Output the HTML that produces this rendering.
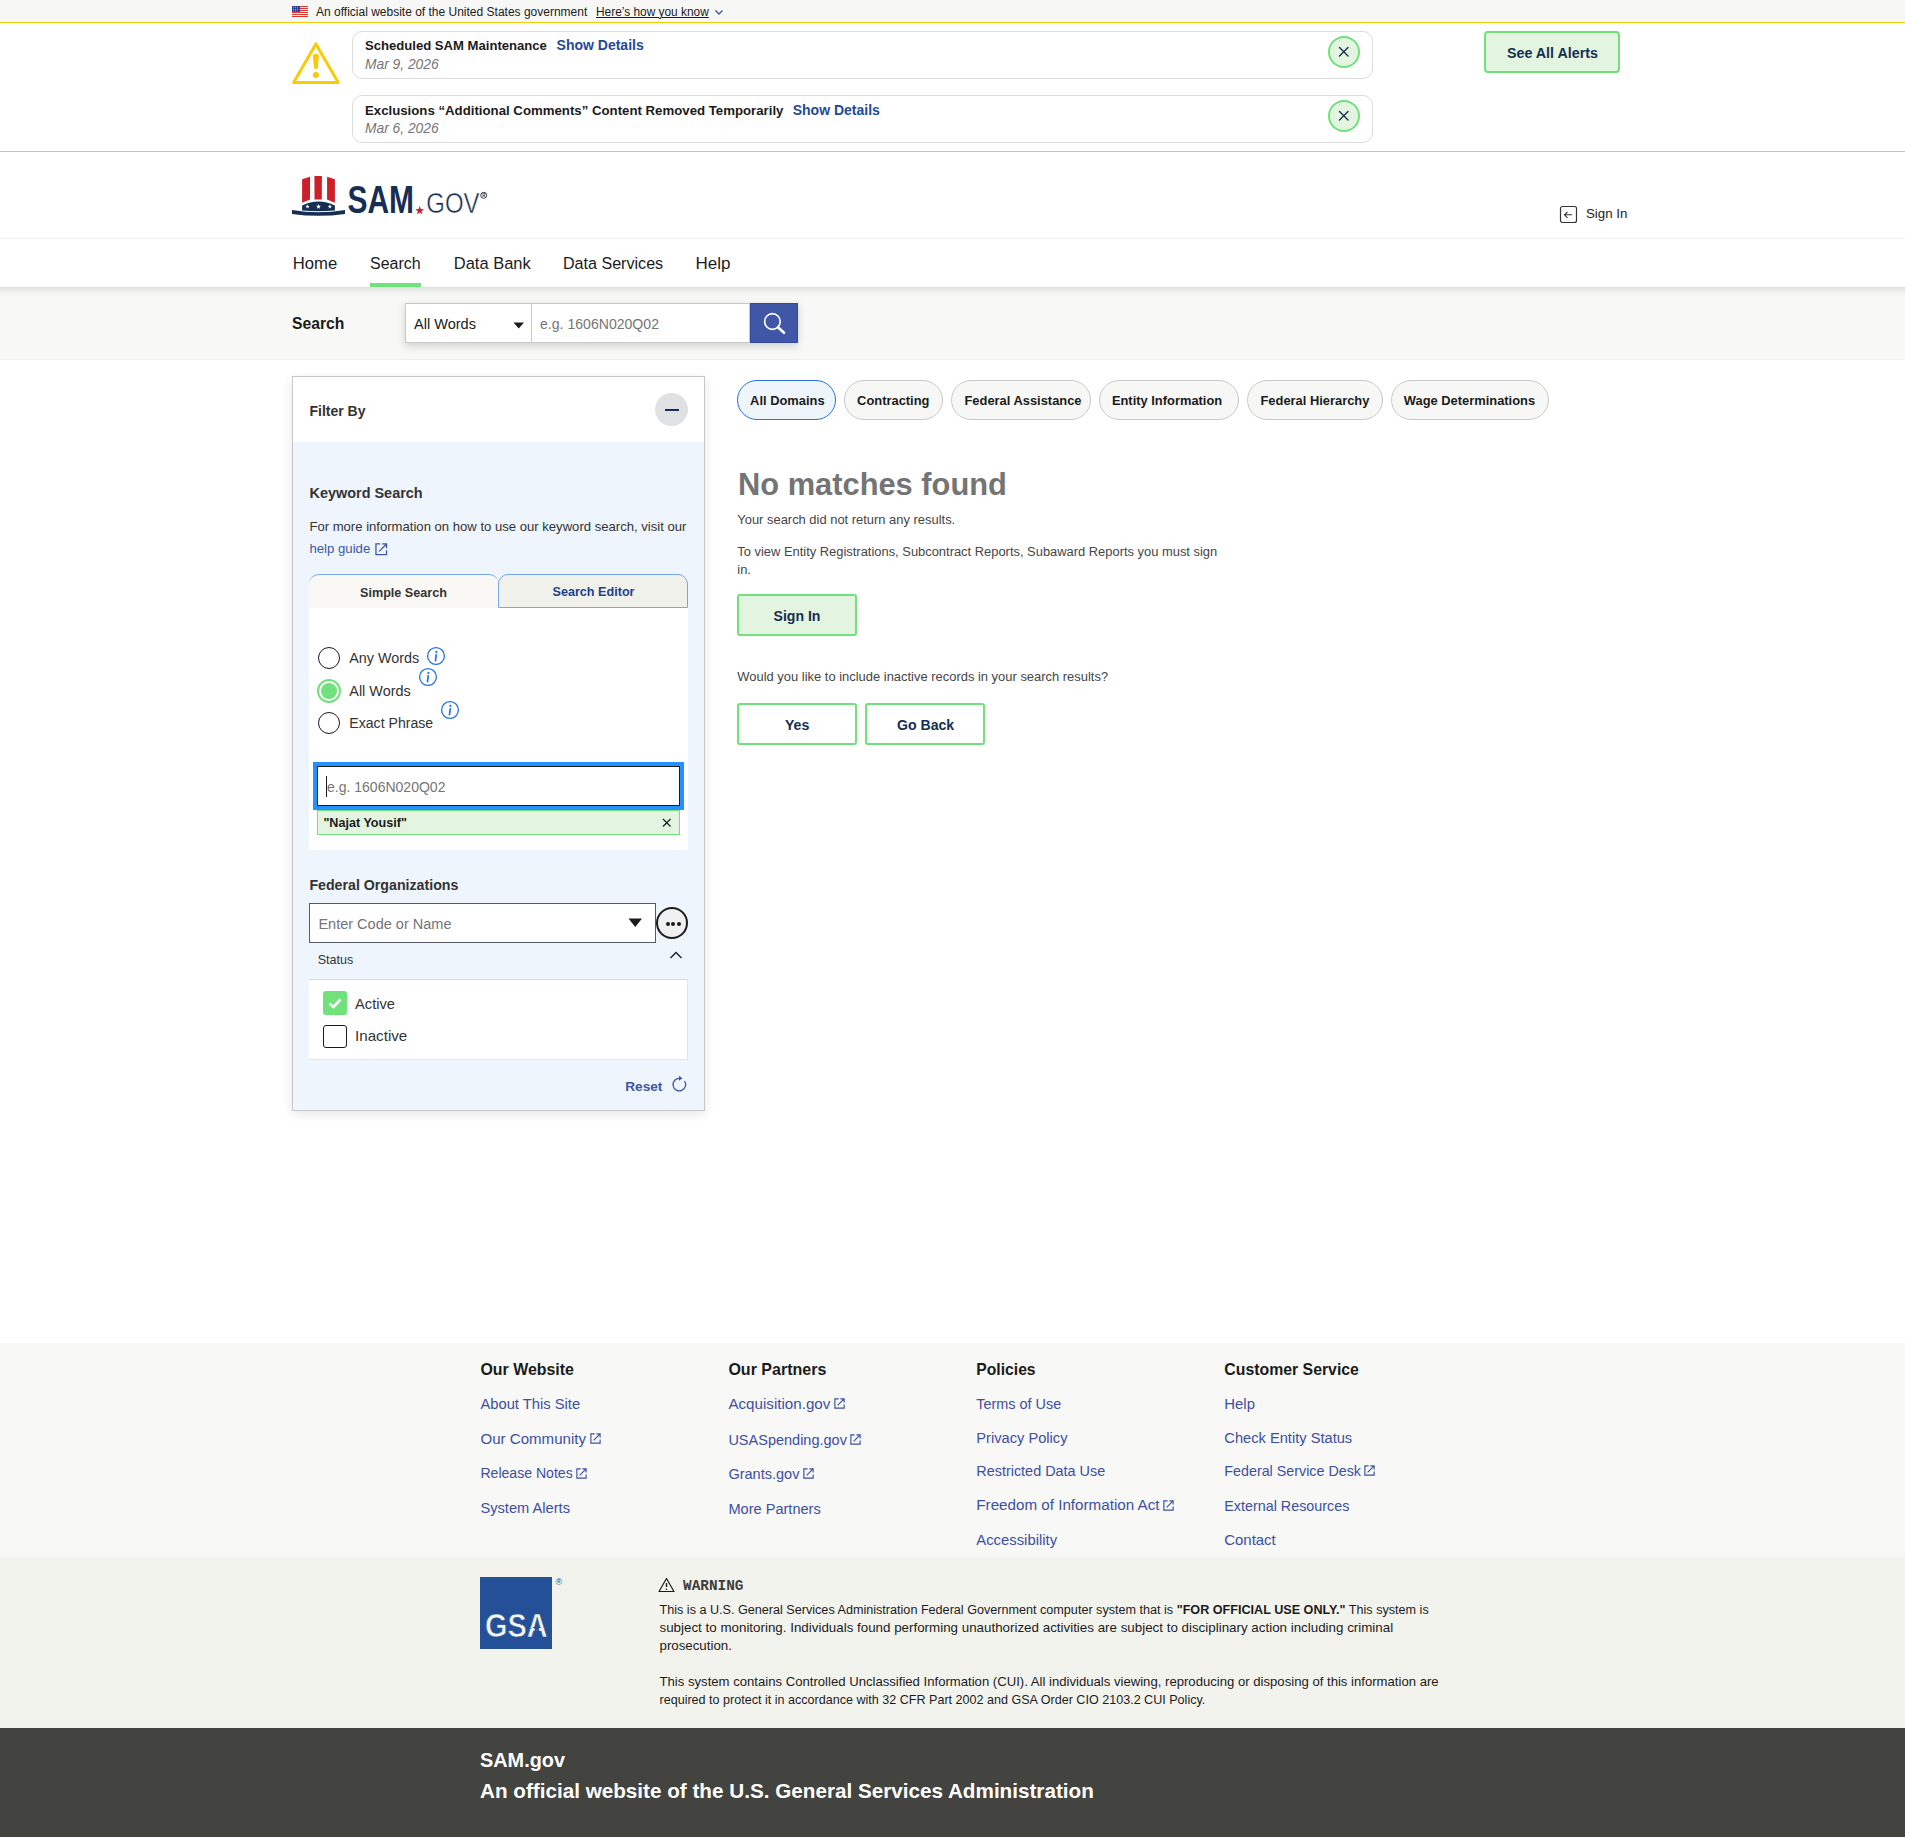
<!DOCTYPE html><html><head><meta charset="utf-8"><title>SAM.gov Search</title><style>
html,body{margin:0;padding:0;width:1905px;height:1837px;overflow:hidden;background:#fff;font-family:"Liberation Sans",sans-serif}
.t{position:absolute;line-height:1;white-space:nowrap}
.b{position:absolute;display:block}
</style></head><body>
<div class="b" style="left:0px;top:0px;width:1905px;height:22px;background:#f7f7f5"></div>
<div class="b" style="left:0px;top:22px;width:1905px;height:1px;background:#f7cb05"></div>
<svg class="b" style="left:292px;top:6px;" width="16" height="11" viewBox="0 0 16 11"><rect width="16" height="11" fill="#fff"/><rect y="0" width="16" height="1.1" fill="#d83933"/><rect y="2" width="16" height="1.1" fill="#d83933"/><rect y="4" width="16" height="1.1" fill="#d83933"/><rect y="6" width="16" height="1.1" fill="#d83933"/><rect y="8" width="16" height="1.1" fill="#d83933"/><rect y="10" width="16" height="1.1" fill="#d83933"/><rect width="8" height="6" fill="#2e3f9b"/><circle cx="1.5" cy="1.2" r="0.45" fill="#fff"/><circle cx="3.5" cy="1.2" r="0.45" fill="#fff"/><circle cx="5.5" cy="1.2" r="0.45" fill="#fff"/><circle cx="1.5" cy="3.2" r="0.45" fill="#fff"/><circle cx="3.5" cy="3.2" r="0.45" fill="#fff"/><circle cx="5.5" cy="3.2" r="0.45" fill="#fff"/><circle cx="1.5" cy="5" r="0.45" fill="#fff"/><circle cx="3.5" cy="5" r="0.45" fill="#fff"/><circle cx="5.5" cy="5" r="0.45" fill="#fff"/></svg>
<div class="t " style="left:316.0px;top:6.00px;font-size:12.0px;font-weight:normal;color:#1b1b1b;font-style:normal;font-family:'Liberation Sans', sans-serif;">An official website of the United States government</div>
<div class="t " style="left:596.0px;top:7.00px;font-size:11.9px;font-weight:normal;color:#1b1b1b;font-style:normal;font-family:'Liberation Sans', sans-serif;text-decoration:underline;text-underline-offset:1px;text-decoration-thickness:1px">Here’s how you know</div>
<svg class="b" style="left:714px;top:9px;" width="10" height="7" viewBox="0 0 10 7"><path d="M1.5 1.5 L5 5 L8.5 1.5" stroke="#3f57a6" stroke-width="1.4" fill="none"/></svg>
<div class="b" style="left:0px;top:151px;width:1905px;height:1px;background:#f7cb05"></div>
<svg class="b" style="left:290px;top:40px;" width="52" height="46" viewBox="0 0 52 46"><path d="M25.9 3.9 L3.6 42.4 L48.2 42.4 Z" stroke="#f7cb05" stroke-width="3" stroke-linejoin="round" fill="none"/><path d="M23.4 15.2 Q25.9 13.2 28.4 15.2 L27.4 28 Q25.9 29.6 24.4 28 Z" fill="#f7cb05" stroke="#f7cb05" stroke-width="1" stroke-linejoin="round"/><circle cx="25.9" cy="35" r="3" fill="#f7cb05"/></svg>
<div class="b" style="left:352px;top:31px;width:1021px;height:48px;border:1px solid #dcdcdc;border-radius:10px;box-sizing:border-box"></div>
<div class="t " style="left:365.0px;top:39.00px;font-size:13.1px;font-weight:bold;color:#1b1b1b;font-style:normal;font-family:'Liberation Sans', sans-serif;">Scheduled SAM Maintenance</div>
<div class="t " style="left:556.6px;top:38.00px;font-size:14.0px;font-weight:bold;color:#1f4a96;font-style:normal;font-family:'Liberation Sans', sans-serif;">Show Details</div>
<div class="t " style="left:365.0px;top:58.00px;font-size:13.8px;font-weight:normal;color:#757575;font-style:italic;font-family:'Liberation Sans', sans-serif;">Mar 9, 2026</div>
<div class="b" style="left:1328px;top:36px;width:32px;height:32px;border:2px solid #70e17b;background:#e3f5e1;border-radius:50%;box-sizing:border-box"></div>
<svg class="b" style="left:1338px;top:46px;" width="12" height="12" viewBox="0 0 12 12"><path d="M1.5 1.5 L10 10 M10 1.5 L1.5 10" stroke="#162e51" stroke-width="1.4" stroke-linecap="round"/></svg>
<div class="b" style="left:352px;top:95px;width:1021px;height:48px;border:1px solid #dcdcdc;border-radius:10px;box-sizing:border-box"></div>
<div class="t " style="left:365.0px;top:104.00px;font-size:13.23px;font-weight:bold;color:#1b1b1b;font-style:normal;font-family:'Liberation Sans', sans-serif;">Exclusions “Additional Comments” Content Removed Temporarily</div>
<div class="t " style="left:792.7px;top:103.00px;font-size:14.0px;font-weight:bold;color:#1f4a96;font-style:normal;font-family:'Liberation Sans', sans-serif;">Show Details</div>
<div class="t " style="left:365.0px;top:122.00px;font-size:13.8px;font-weight:normal;color:#757575;font-style:italic;font-family:'Liberation Sans', sans-serif;">Mar 6, 2026</div>
<div class="b" style="left:1328px;top:100px;width:32px;height:32px;border:2px solid #70e17b;background:#e3f5e1;border-radius:50%;box-sizing:border-box"></div>
<svg class="b" style="left:1338px;top:110px;" width="12" height="12" viewBox="0 0 12 12"><path d="M1.5 1.5 L10 10 M10 1.5 L1.5 10" stroke="#162e51" stroke-width="1.4" stroke-linecap="round"/></svg>
<div class="b" style="left:1484px;top:31px;width:136px;height:42px;border:2px solid #70e17b;background:#e3f5e1;border-radius:4px;box-sizing:border-box"></div>
<div class="t " style="left:1507.0px;top:46.00px;font-size:14.28px;font-weight:bold;color:#162e51;font-style:normal;font-family:'Liberation Sans', sans-serif;">See All Alerts</div>
<svg class="b" style="left:292px;top:170px;" width="60" height="52" viewBox="0 0 60 52"><path d="M10.1 9.2 L18 6.8 L18 29.4 L10.1 32.7 Z" fill="#cc1f2a"/>
<path d="M22.4 6.1 L29.9 6.1 L29.8 29.4 L22.5 29.4 Z" fill="#cc1f2a"/>
<path d="M35.1 6.8 L42.9 9.2 L42.9 32.7 L35.1 29.4 Z" fill="#cc1f2a"/>
<path d="M10.1 35.5 Q26.5 27.5 42.9 35.5 L42.9 40.5 Q26.5 42 10.1 40.5 Z" fill="#162e51"/>
<path d="M0 39.9 Q26.5 44.6 53 39.9 L53 43.9 Q26.5 47.6 0 43.9 Z" fill="#162e51"/><polygon points="15.50,34.40 16.04,35.85 17.59,35.92 16.38,36.89 16.79,38.38 15.50,37.52 14.21,38.38 14.62,36.89 13.41,35.92 14.96,35.85" fill="#fff"/><polygon points="26.50,34.00 27.14,35.72 28.97,35.80 27.54,36.94 28.03,38.70 26.50,37.69 24.97,38.70 25.46,36.94 24.03,35.80 25.86,35.72" fill="#fff"/><polygon points="37.90,34.40 38.44,35.85 39.99,35.92 38.78,36.89 39.19,38.38 37.90,37.52 36.61,38.38 37.02,36.89 35.81,35.92 37.36,35.85" fill="#fff"/></svg>
<svg class="b" style="left:340px;top:170px;" width="160" height="52" viewBox="0 0 160 52"><text x="7.5" y="42.8" font-family="Liberation Sans" font-weight="bold" font-size="39" fill="#162e51" textLength="66.5" lengthAdjust="spacingAndGlyphs">SAM</text>
<polygon points="79.70,36.00 80.84,39.04 84.07,39.18 81.54,41.20 82.40,44.32 79.70,42.53 77.00,44.32 77.86,41.20 75.33,39.18 78.56,39.04" fill="#d0202e"/>
<text x="86.3" y="43.4" font-family="Liberation Sans" font-size="30" fill="#162e51" stroke="#fff" stroke-width="0.5" paint-order="normal" textLength="53.2" lengthAdjust="spacingAndGlyphs">GOV</text>
<circle cx="143.7" cy="25.3" r="3" fill="none" stroke="#162e51" stroke-width="0.9"/><text x="142.3" y="27" font-family="Liberation Sans" font-weight="bold" font-size="4.5" fill="#162e51">R</text></svg>
<svg class="b" style="left:1559px;top:205px;" width="19" height="19" viewBox="0 0 19 19"><rect x="1.5" y="1.5" width="16" height="16" rx="2" fill="none" stroke="#333" stroke-width="1.2"/><path d="M13 9.8 L5.5 9.8 M8.5 6.8 L5.5 9.8 L8.5 12.8" stroke="#333" stroke-width="1.1" fill="none"/></svg>
<div class="t " style="left:1586.0px;top:207.00px;font-size:13.3px;font-weight:normal;color:#1b1b1b;font-style:normal;font-family:'Liberation Sans', sans-serif;">Sign In</div>
<div class="b" style="left:0px;top:238px;width:1905px;height:1px;background:#efefeb"></div>
<div class="b" style="left:0px;top:287px;width:1905px;height:73px;background:#f8f8f6"></div>
<div class="b" style="left:0px;top:359px;width:1905px;height:1px;background:#f0f0eb"></div>
<div class="b" style="left:0px;top:287px;width:1905px;height:10px;background:linear-gradient(rgba(0,0,0,0.1),rgba(0,0,0,0.02) 60%,rgba(0,0,0,0))"></div>
<div class="t " style="left:292.7px;top:256.00px;font-size:16.68px;font-weight:normal;color:#1b1b1b;font-style:normal;font-family:'Liberation Sans', sans-serif;">Home</div>
<div class="t " style="left:370.0px;top:256.00px;font-size:15.97px;font-weight:normal;color:#1b1b1b;font-style:normal;font-family:'Liberation Sans', sans-serif;">Search</div>
<div class="t " style="left:453.8px;top:255.00px;font-size:16.49px;font-weight:normal;color:#1b1b1b;font-style:normal;font-family:'Liberation Sans', sans-serif;">Data Bank</div>
<div class="t " style="left:562.9px;top:255.00px;font-size:16.11px;font-weight:normal;color:#1b1b1b;font-style:normal;font-family:'Liberation Sans', sans-serif;">Data Services</div>
<div class="t " style="left:695.5px;top:255.00px;font-size:17.0px;font-weight:normal;color:#1b1b1b;font-style:normal;font-family:'Liberation Sans', sans-serif;">Help</div>
<div class="b" style="left:370px;top:283px;width:51px;height:4px;background:#70e17b"></div>
<div class="t " style="left:292.0px;top:316.00px;font-size:15.7px;font-weight:bold;color:#1b1b1b;font-style:normal;font-family:'Liberation Sans', sans-serif;">Search</div>
<div class="b" style="left:405px;top:303px;width:393px;height:40px;box-shadow:0 3px 8px rgba(0,0,0,0.16)"></div>
<div class="b" style="left:405px;top:303px;width:127px;height:40px;background:#fff;border:1px solid #c8c8c8;box-sizing:border-box"></div>
<div class="t " style="left:414.0px;top:317.00px;font-size:14.55px;font-weight:normal;color:#1b1b1b;font-style:normal;font-family:'Liberation Sans', sans-serif;">All Words</div>
<svg class="b" style="left:513px;top:322px;" width="12" height="7" viewBox="0 0 12 7"><path d="M0.5 0.5 L11 0.5 L5.75 6.5 Z" fill="#1b1b1b"/></svg>
<div class="b" style="left:531px;top:303px;width:219px;height:40px;background:#fff;border:1px solid #c8c8c8;border-left:1px solid #c8c8c8;box-sizing:border-box"></div>
<div class="t " style="left:540.0px;top:317.00px;font-size:14.08px;font-weight:normal;color:#757575;font-style:normal;font-family:'Liberation Sans', sans-serif;">e.g. 1606N020Q02</div>
<div class="b" style="left:750px;top:303px;width:48px;height:40px;background:#3f57a6;border:1px solid #2f4aa0;box-sizing:border-box"></div>
<svg class="b" style="left:760px;top:311px;" width="30" height="28" viewBox="0 0 30 28"><circle cx="12.4" cy="10.5" r="7.8" fill="none" stroke="#fff" stroke-width="1.7"/><path d="M18 16.2 L24 21.8" stroke="#fff" stroke-width="2.6" stroke-linecap="round"/></svg>
<div class="b" style="left:292px;top:376px;width:413px;height:735px;border:1px solid #c8c8c8;box-sizing:border-box;background:#eef5fc;box-shadow:0 3px 10px rgba(0,0,0,0.1)"></div>
<div class="b" style="left:293px;top:377px;width:411px;height:65px;background:#fff"></div>
<div class="t " style="left:309.5px;top:404.00px;font-size:14.0px;font-weight:bold;color:#333;font-style:normal;font-family:'Liberation Sans', sans-serif;">Filter By</div>
<div class="b" style="left:655px;top:393px;width:33px;height:33px;background:#dfe1e2;border-radius:50%"></div>
<div class="b" style="left:665px;top:409px;width:14px;height:1.5px;background:#162e51"></div>
<div class="t " style="left:309.5px;top:486.00px;font-size:14.45px;font-weight:bold;color:#333;font-style:normal;font-family:'Liberation Sans', sans-serif;">Keyword Search</div>
<div class="t " style="left:309.4px;top:520.00px;font-size:13.1px;font-weight:normal;color:#333;font-style:normal;font-family:'Liberation Sans', sans-serif;">For more information on how to use our keyword search, visit our</div>
<div class="t " style="left:309.4px;top:542.00px;font-size:13.2px;font-weight:normal;color:#3f57a6;font-style:normal;font-family:'Liberation Sans', sans-serif;">help guide</div>
<svg class="b" style="left:375px;top:543px;" width="12.5" height="12.5" viewBox="0 0 12.5 12.5"><path d="M5.25 0.95 L0.95 0.95 L0.95 11.55 L11.55 11.55 L11.55 7.25" stroke="#3f57a6" stroke-width="1.3" fill="none"/><path d="M4.12 8.38 L11.55 0.95 M7.25 0.95 L11.55 0.95 L11.55 5.25" stroke="#3f57a6" stroke-width="1.3" fill="none"/></svg>
<div class="b" style="left:309px;top:574px;width:190px;height:35px;background:#f9f8f5;border-top:1px solid #79a5ea;border-radius:10px 10px 0 0;box-sizing:border-box"></div>
<div class="b" style="left:498px;top:574px;width:190px;height:34px;background:#f1f1ec;border:1px solid #79a5ea;border-radius:10px 10px 0 0;box-sizing:border-box"></div>
<div class="b" style="left:309px;top:590px;width:189px;height:18px;background:#f9f8f5"></div>
<div class="t " style="left:360.0px;top:587.00px;font-size:12.62px;font-weight:bold;color:#333;font-style:normal;font-family:'Liberation Sans', sans-serif;">Simple Search</div>
<div class="t " style="left:552.5px;top:586.00px;font-size:12.61px;font-weight:bold;color:#1f3f8a;font-style:normal;font-family:'Liberation Sans', sans-serif;">Search Editor</div>
<div class="b" style="left:309px;top:608px;width:379px;height:242px;background:#fff"></div>
<div class="b" style="left:318px;top:647px;width:22px;height:22px;border:1.5px solid #1b1b1b;background:#fff;border-radius:50%;box-sizing:border-box"></div>
<div class="t " style="left:349.3px;top:651.00px;font-size:14.37px;font-weight:normal;color:#333;font-style:normal;font-family:'Liberation Sans', sans-serif;">Any Words</div>
<svg class="b" style="left:426.3px;top:646.2px;" width="20" height="20" viewBox="0 0 20 20"><circle cx="10" cy="10" r="8.4" fill="none" stroke="#2672de" stroke-width="1.3"/><circle cx="10.4" cy="5.9" r="1.1" fill="#2672de"/><path d="M10.2 8.9 L9.5 14.6" stroke="#2672de" stroke-width="1.7" stroke-linecap="round"/></svg>
<div class="b" style="left:319px;top:681px;width:20px;height:20px;border:2px solid #fff;box-shadow:0 0 0 2px #70e17b;background:#70e17b;border-radius:50%;box-sizing:border-box"></div>
<div class="t " style="left:349.3px;top:684.00px;font-size:14.41px;font-weight:normal;color:#333;font-style:normal;font-family:'Liberation Sans', sans-serif;">All Words</div>
<svg class="b" style="left:418.2px;top:667.2px;" width="20" height="20" viewBox="0 0 20 20"><circle cx="10" cy="10" r="8.4" fill="none" stroke="#2672de" stroke-width="1.3"/><circle cx="10.4" cy="5.9" r="1.1" fill="#2672de"/><path d="M10.2 8.9 L9.5 14.6" stroke="#2672de" stroke-width="1.7" stroke-linecap="round"/></svg>
<div class="b" style="left:318px;top:712px;width:22px;height:22px;border:1.5px solid #1b1b1b;background:#fff;border-radius:50%;box-sizing:border-box"></div>
<div class="t " style="left:349.3px;top:716.00px;font-size:14.12px;font-weight:normal;color:#333;font-style:normal;font-family:'Liberation Sans', sans-serif;">Exact Phrase</div>
<svg class="b" style="left:440.2px;top:700.2px;" width="20" height="20" viewBox="0 0 20 20"><circle cx="10" cy="10" r="8.4" fill="none" stroke="#2672de" stroke-width="1.3"/><circle cx="10.4" cy="5.9" r="1.1" fill="#2672de"/><path d="M10.2 8.9 L9.5 14.6" stroke="#2672de" stroke-width="1.7" stroke-linecap="round"/></svg>
<div class="b" style="left:313px;top:762px;width:371px;height:48px;border:4px solid #2491ff;box-sizing:border-box;background:#fff"></div>
<div class="b" style="left:317px;top:766px;width:363px;height:40px;border:1px solid #1b1b1b;box-sizing:border-box"></div>
<div class="b" style="left:326px;top:776px;width:1px;height:21px;background:#1b1b1b"></div>
<div class="t " style="left:327.0px;top:780.00px;font-size:14.02px;font-weight:normal;color:#757575;font-style:normal;font-family:'Liberation Sans', sans-serif;">e.g. 1606N020Q02</div>
<div class="b" style="left:317px;top:810px;width:363px;height:25px;background:#e3f5e1;border:1px solid #70e17b;box-sizing:border-box"></div>
<div class="t " style="left:323.4px;top:817.00px;font-size:12.59px;font-weight:bold;color:#1b1b1b;font-style:normal;font-family:'Liberation Sans', sans-serif;">"Najat Yousif"</div>
<svg class="b" style="left:662px;top:818px;" width="10" height="10" viewBox="0 0 10 10"><path d="M1 1 L8.5 8.5 M8.5 1 L1 8.5" stroke="#1b1b1b" stroke-width="1.2"/></svg>
<div class="t " style="left:309.4px;top:878.00px;font-size:14.19px;font-weight:bold;color:#333;font-style:normal;font-family:'Liberation Sans', sans-serif;">Federal Organizations</div>
<div class="b" style="left:309px;top:903px;width:347px;height:40px;background:#fff;border:1px solid #565c65;box-sizing:border-box"></div>
<div class="t " style="left:318.4px;top:917.00px;font-size:14.53px;font-weight:normal;color:#757575;font-style:normal;font-family:'Liberation Sans', sans-serif;">Enter Code or Name</div>
<svg class="b" style="left:628px;top:918px;" width="15" height="10" viewBox="0 0 15 10"><path d="M0.5 0.5 L14 0.5 L7.25 9 Z" fill="#1b1b1b"/></svg>
<div class="b" style="left:656px;top:907px;width:32px;height:32px;border:2px solid #1b1b1b;background:#f0f0f0;border-radius:50%;box-sizing:border-box"></div>
<div class="b" style="left:665.7px;top:921.7px;width:4.0px;height:4.0px;background:#1b1b1b;border-radius:50%"></div>
<div class="b" style="left:671.2px;top:921.7px;width:4.0px;height:4.0px;background:#1b1b1b;border-radius:50%"></div>
<div class="b" style="left:676.7px;top:921.7px;width:4.0px;height:4.0px;background:#1b1b1b;border-radius:50%"></div>
<div class="t " style="left:317.7px;top:954.00px;font-size:12.52px;font-weight:normal;color:#333;font-style:normal;font-family:'Liberation Sans', sans-serif;">Status</div>
<svg class="b" style="left:669px;top:950px;" width="14" height="10" viewBox="0 0 14 10"><path d="M1.5 8 L7 2.5 L12.5 8" stroke="#1b1b1b" stroke-width="1.3" fill="none"/></svg>
<div class="b" style="left:309px;top:979px;width:379px;height:81px;background:#fff;border:1px solid #e4e4e4;border-top:1.5px solid #d9dadb;border-left:none;box-sizing:border-box"></div>
<div class="b" style="left:323px;top:991px;width:24px;height:24px;background:#70e17b;border-radius:3px"></div>
<svg class="b" style="left:323px;top:991px;" width="24" height="24" viewBox="0 0 24 24"><path d="M6.5 12.5 L10.5 16 L17.5 8.5" stroke="#fff" stroke-width="2.6" fill="none"/></svg>
<div class="t " style="left:355.0px;top:997.00px;font-size:14.69px;font-weight:normal;color:#333;font-style:normal;font-family:'Liberation Sans', sans-serif;">Active</div>
<div class="b" style="left:323px;top:1025px;width:24px;height:23px;border:1.5px solid #1b1b1b;border-radius:3px;box-sizing:border-box;background:#fff"></div>
<div class="t " style="left:355.0px;top:1028.00px;font-size:15.18px;font-weight:normal;color:#333;font-style:normal;font-family:'Liberation Sans', sans-serif;">Inactive</div>
<div class="t " style="left:625.2px;top:1080.00px;font-size:13.66px;font-weight:bold;color:#3f57a6;font-style:normal;font-family:'Liberation Sans', sans-serif;">Reset</div>
<svg class="b" style="left:671px;top:1075px;" width="17" height="18" viewBox="0 0 17 18"><path d="M13.5 6 A6.3 6.3 0 1 1 8.5 3.3" stroke="#3f57a6" stroke-width="1.3" fill="none"/><path d="M8 0.8 L11.5 3.3 L8 5.8 Z" fill="#3f57a6"/></svg>
<div class="b" style="left:737px;top:380px;width:99px;height:40px;background:#eef5fb;border:1.5px solid #2672de;border-radius:20px;box-sizing:border-box"></div>
<div class="t " style="left:750.1px;top:395.00px;font-size:12.9px;font-weight:bold;color:#1b1b1b;font-style:normal;font-family:'Liberation Sans', sans-serif;">All Domains</div>
<div class="b" style="left:844px;top:380px;width:99px;height:40px;background:#f7f7f5;border:1px solid #c9c9c9;border-radius:20px;box-sizing:border-box"></div>
<div class="t " style="left:857.1px;top:395.00px;font-size:12.9px;font-weight:bold;color:#1b1b1b;font-style:normal;font-family:'Liberation Sans', sans-serif;">Contracting</div>
<div class="b" style="left:951px;top:380px;width:140px;height:40px;background:#f7f7f5;border:1px solid #c9c9c9;border-radius:20px;box-sizing:border-box"></div>
<div class="t " style="left:964.5px;top:395.00px;font-size:12.9px;font-weight:bold;color:#1b1b1b;font-style:normal;font-family:'Liberation Sans', sans-serif;">Federal Assistance</div>
<div class="b" style="left:1099px;top:380px;width:140px;height:40px;background:#f7f7f5;border:1px solid #c9c9c9;border-radius:20px;box-sizing:border-box"></div>
<div class="t " style="left:1111.9px;top:395.00px;font-size:12.9px;font-weight:bold;color:#1b1b1b;font-style:normal;font-family:'Liberation Sans', sans-serif;">Entity Information</div>
<div class="b" style="left:1247px;top:380px;width:136px;height:40px;background:#f7f7f5;border:1px solid #c9c9c9;border-radius:20px;box-sizing:border-box"></div>
<div class="t " style="left:1260.5px;top:395.00px;font-size:12.9px;font-weight:bold;color:#1b1b1b;font-style:normal;font-family:'Liberation Sans', sans-serif;">Federal Hierarchy</div>
<div class="b" style="left:1391px;top:380px;width:158px;height:40px;background:#f7f7f5;border:1px solid #c9c9c9;border-radius:20px;box-sizing:border-box"></div>
<div class="t " style="left:1403.8px;top:395.00px;font-size:12.9px;font-weight:bold;color:#1b1b1b;font-style:normal;font-family:'Liberation Sans', sans-serif;">Wage Determinations</div>
<div class="t " style="left:738.0px;top:470.00px;font-size:30.84px;font-weight:bold;color:#747474;font-style:normal;font-family:'Liberation Sans', sans-serif;">No matches found</div>
<div class="t " style="left:737.3px;top:514.00px;font-size:12.93px;font-weight:normal;color:#454545;font-style:normal;font-family:'Liberation Sans', sans-serif;">Your search did not return any results.</div>
<div class="t " style="left:737.3px;top:546.00px;font-size:12.91px;font-weight:normal;color:#454545;font-style:normal;font-family:'Liberation Sans', sans-serif;">To view Entity Registrations, Subcontract Reports, Subaward Reports you must sign</div>
<div class="t " style="left:737.3px;top:564.00px;font-size:12.91px;font-weight:normal;color:#454545;font-style:normal;font-family:'Liberation Sans', sans-serif;">in.</div>
<div class="b" style="left:737px;top:594px;width:120px;height:42px;background:#e3f5e1;border:2px solid #70e17b;border-radius:3px;box-sizing:border-box"></div>
<div class="t " style="left:773.5px;top:609.00px;font-size:14.1px;font-weight:bold;color:#162e51;font-style:normal;font-family:'Liberation Sans', sans-serif;">Sign In</div>
<div class="t " style="left:737.3px;top:671.00px;font-size:12.94px;font-weight:normal;color:#454545;font-style:normal;font-family:'Liberation Sans', sans-serif;">Would you like to include inactive records in your search results?</div>
<div class="b" style="left:737px;top:703px;width:120px;height:42px;background:#fff;border:2px solid #70e17b;border-radius:3px;box-sizing:border-box"></div>
<div class="t " style="left:785.0px;top:718.00px;font-size:14.1px;font-weight:bold;color:#162e51;font-style:normal;font-family:'Liberation Sans', sans-serif;">Yes</div>
<div class="b" style="left:865px;top:703px;width:120px;height:42px;background:#fff;border:2px solid #70e17b;border-radius:3px;box-sizing:border-box"></div>
<div class="t " style="left:897.0px;top:718.00px;font-size:14.1px;font-weight:bold;color:#162e51;font-style:normal;font-family:'Liberation Sans', sans-serif;">Go Back</div>
<div class="b" style="left:0px;top:1343px;width:1905px;height:214px;background:#f8f8f6"></div>
<div class="t " style="left:480.4px;top:1362.00px;font-size:15.94px;font-weight:bold;color:#1b1b1b;font-style:normal;font-family:'Liberation Sans', sans-serif;">Our Website</div>
<div class="t " style="left:480.4px;top:1397.00px;font-size:14.76px;font-weight:normal;color:#3d4fa1;font-style:normal;font-family:'Liberation Sans', sans-serif;">About This Site</div>
<div class="t " style="left:480.4px;top:1431.00px;font-size:15.1px;font-weight:normal;color:#3d4fa1;font-style:normal;font-family:'Liberation Sans', sans-serif;">Our Community</div>
<svg class="b" style="left:590px;top:1433px;" width="11" height="11" viewBox="0 0 11 11"><path d="M4.62 0.88 L0.88 0.88 L0.88 10.12 L10.12 10.12 L10.12 6.38" stroke="#3d4fa1" stroke-width="1.15" fill="none"/><path d="M3.63 7.37 L10.12 0.88 M6.38 0.88 L10.12 0.88 L10.12 4.62" stroke="#3d4fa1" stroke-width="1.15" fill="none"/></svg>
<div class="t " style="left:480.4px;top:1466.00px;font-size:14.09px;font-weight:normal;color:#3d4fa1;font-style:normal;font-family:'Liberation Sans', sans-serif;">Release Notes</div>
<svg class="b" style="left:576px;top:1468px;" width="11" height="11" viewBox="0 0 11 11"><path d="M4.62 0.88 L0.88 0.88 L0.88 10.12 L10.12 10.12 L10.12 6.38" stroke="#3d4fa1" stroke-width="1.15" fill="none"/><path d="M3.63 7.37 L10.12 0.88 M6.38 0.88 L10.12 0.88 L10.12 4.62" stroke="#3d4fa1" stroke-width="1.15" fill="none"/></svg>
<div class="t " style="left:480.4px;top:1501.00px;font-size:14.66px;font-weight:normal;color:#3d4fa1;font-style:normal;font-family:'Liberation Sans', sans-serif;">System Alerts</div>
<div class="t " style="left:728.4px;top:1361.00px;font-size:16.05px;font-weight:bold;color:#1b1b1b;font-style:normal;font-family:'Liberation Sans', sans-serif;">Our Partners</div>
<div class="t " style="left:728.4px;top:1396.00px;font-size:15.17px;font-weight:normal;color:#3d4fa1;font-style:normal;font-family:'Liberation Sans', sans-serif;">Acquisition.gov</div>
<svg class="b" style="left:834px;top:1398px;" width="11" height="11" viewBox="0 0 11 11"><path d="M4.62 0.88 L0.88 0.88 L0.88 10.12 L10.12 10.12 L10.12 6.38" stroke="#3d4fa1" stroke-width="1.15" fill="none"/><path d="M3.63 7.37 L10.12 0.88 M6.38 0.88 L10.12 0.88 L10.12 4.62" stroke="#3d4fa1" stroke-width="1.15" fill="none"/></svg>
<div class="t " style="left:728.4px;top:1433.00px;font-size:14.5px;font-weight:normal;color:#3d4fa1;font-style:normal;font-family:'Liberation Sans', sans-serif;">USASpending.gov</div>
<svg class="b" style="left:850px;top:1434px;" width="11" height="11" viewBox="0 0 11 11"><path d="M4.62 0.88 L0.88 0.88 L0.88 10.12 L10.12 10.12 L10.12 6.38" stroke="#3d4fa1" stroke-width="1.15" fill="none"/><path d="M3.63 7.37 L10.12 0.88 M6.38 0.88 L10.12 0.88 L10.12 4.62" stroke="#3d4fa1" stroke-width="1.15" fill="none"/></svg>
<div class="t " style="left:728.4px;top:1467.00px;font-size:14.54px;font-weight:normal;color:#3d4fa1;font-style:normal;font-family:'Liberation Sans', sans-serif;">Grants.gov</div>
<svg class="b" style="left:803px;top:1468px;" width="11" height="11" viewBox="0 0 11 11"><path d="M4.62 0.88 L0.88 0.88 L0.88 10.12 L10.12 10.12 L10.12 6.38" stroke="#3d4fa1" stroke-width="1.15" fill="none"/><path d="M3.63 7.37 L10.12 0.88 M6.38 0.88 L10.12 0.88 L10.12 4.62" stroke="#3d4fa1" stroke-width="1.15" fill="none"/></svg>
<div class="t " style="left:728.4px;top:1502.00px;font-size:14.59px;font-weight:normal;color:#3d4fa1;font-style:normal;font-family:'Liberation Sans', sans-serif;">More Partners</div>
<div class="t " style="left:976.3px;top:1362.00px;font-size:15.69px;font-weight:bold;color:#1b1b1b;font-style:normal;font-family:'Liberation Sans', sans-serif;">Policies</div>
<div class="t " style="left:976.3px;top:1397.00px;font-size:14.43px;font-weight:normal;color:#3d4fa1;font-style:normal;font-family:'Liberation Sans', sans-serif;">Terms of Use</div>
<div class="t " style="left:976.3px;top:1431.00px;font-size:14.67px;font-weight:normal;color:#3d4fa1;font-style:normal;font-family:'Liberation Sans', sans-serif;">Privacy Policy</div>
<div class="t " style="left:976.3px;top:1464.00px;font-size:14.41px;font-weight:normal;color:#3d4fa1;font-style:normal;font-family:'Liberation Sans', sans-serif;">Restricted Data Use</div>
<div class="t " style="left:976.3px;top:1497.00px;font-size:15.19px;font-weight:normal;color:#3d4fa1;font-style:normal;font-family:'Liberation Sans', sans-serif;">Freedom of Information Act</div>
<svg class="b" style="left:1163px;top:1500px;" width="11" height="11" viewBox="0 0 11 11"><path d="M4.62 0.88 L0.88 0.88 L0.88 10.12 L10.12 10.12 L10.12 6.38" stroke="#3d4fa1" stroke-width="1.15" fill="none"/><path d="M3.63 7.37 L10.12 0.88 M6.38 0.88 L10.12 0.88 L10.12 4.62" stroke="#3d4fa1" stroke-width="1.15" fill="none"/></svg>
<div class="t " style="left:976.3px;top:1533.00px;font-size:14.84px;font-weight:normal;color:#3d4fa1;font-style:normal;font-family:'Liberation Sans', sans-serif;">Accessibility</div>
<div class="t " style="left:1224.3px;top:1362.00px;font-size:15.83px;font-weight:bold;color:#1b1b1b;font-style:normal;font-family:'Liberation Sans', sans-serif;">Customer Service</div>
<div class="t " style="left:1224.3px;top:1397.00px;font-size:14.92px;font-weight:normal;color:#3d4fa1;font-style:normal;font-family:'Liberation Sans', sans-serif;">Help</div>
<div class="t " style="left:1224.3px;top:1431.00px;font-size:14.67px;font-weight:normal;color:#3d4fa1;font-style:normal;font-family:'Liberation Sans', sans-serif;">Check Entity Status</div>
<div class="t " style="left:1224.3px;top:1464.00px;font-size:14.3px;font-weight:normal;color:#3d4fa1;font-style:normal;font-family:'Liberation Sans', sans-serif;">Federal Service Desk</div>
<svg class="b" style="left:1364px;top:1465px;" width="11" height="11" viewBox="0 0 11 11"><path d="M4.62 0.88 L0.88 0.88 L0.88 10.12 L10.12 10.12 L10.12 6.38" stroke="#3d4fa1" stroke-width="1.15" fill="none"/><path d="M3.63 7.37 L10.12 0.88 M6.38 0.88 L10.12 0.88 L10.12 4.62" stroke="#3d4fa1" stroke-width="1.15" fill="none"/></svg>
<div class="t " style="left:1224.3px;top:1499.00px;font-size:14.33px;font-weight:normal;color:#3d4fa1;font-style:normal;font-family:'Liberation Sans', sans-serif;">External Resources</div>
<div class="t " style="left:1224.3px;top:1533.00px;font-size:14.92px;font-weight:normal;color:#3d4fa1;font-style:normal;font-family:'Liberation Sans', sans-serif;">Contact</div>
<div class="b" style="left:0px;top:1557px;width:1905px;height:171px;background:#f3f3ee"></div>
<svg class="b" style="left:480px;top:1577px;" width="90" height="73" viewBox="0 0 90 73"><rect x="0" y="0" width="72" height="72" fill="#235097"/><text x="5" y="60.2" font-family="Liberation Sans" font-weight="bold" font-size="33.5" fill="#f5f5f0" stroke="#235097" stroke-width="0.7" textLength="62.5" lengthAdjust="spacingAndGlyphs">GSA</text><polygon points="56.80,46.90 57.94,49.94 61.17,50.08 58.64,52.10 59.50,55.22 56.80,53.43 54.10,55.22 54.96,52.10 52.43,50.08 55.66,49.94" fill="#235097"/><text x="75.5" y="7.5" font-family="Liberation Sans" font-size="9" fill="#235097">®</text></svg>
<svg class="b" style="left:658px;top:1577px;" width="18" height="16" viewBox="0 0 18 16"><path d="M8.5 1.5 L16 14.5 L1 14.5 Z" stroke="#1b1b1b" stroke-width="1.2" fill="none" stroke-linejoin="round"/><path d="M8.5 6 L8.5 10" stroke="#1b1b1b" stroke-width="1.4"/><circle cx="8.5" cy="12.2" r="0.8" fill="#1b1b1b"/></svg>
<div class="t " style="left:683.0px;top:1579.00px;font-size:14.4px;font-weight:bold;color:#3d3d3d;font-style:normal;font-family:'Liberation Mono', monospace;">WARNING</div>
<div class="t " style="left:659.5px;top:1604.00px;font-size:12.61px;font-weight:normal;color:#1b1b1b;font-style:normal;font-family:'Liberation Sans', sans-serif;">This is a U.S. General Services Administration Federal Government computer system that is <b>"FOR OFFICIAL USE ONLY."</b> This system is</div>
<div class="t " style="left:659.5px;top:1621.00px;font-size:13.37px;font-weight:normal;color:#1b1b1b;font-style:normal;font-family:'Liberation Sans', sans-serif;">subject to monitoring. Individuals found performing unauthorized activities are subject to disciplinary action including criminal</div>
<div class="t " style="left:659.5px;top:1639.00px;font-size:13.29px;font-weight:normal;color:#1b1b1b;font-style:normal;font-family:'Liberation Sans', sans-serif;">prosecution.</div>
<div class="t " style="left:659.5px;top:1675.00px;font-size:13.13px;font-weight:normal;color:#1b1b1b;font-style:normal;font-family:'Liberation Sans', sans-serif;">This system contains Controlled Unclassified Information (CUI). All individuals viewing, reproducing or disposing of this information are</div>
<div class="t " style="left:659.5px;top:1694.00px;font-size:12.57px;font-weight:normal;color:#1b1b1b;font-style:normal;font-family:'Liberation Sans', sans-serif;">required to protect it in accordance with 32 CFR Part 2002 and GSA Order CIO 2103.2 CUI Policy.</div>
<div class="b" style="left:0px;top:1728px;width:1905px;height:109px;background:#43433f"></div>
<div class="t " style="left:480.0px;top:1751.00px;font-size:19.87px;font-weight:bold;color:#fff;font-style:normal;font-family:'Liberation Sans', sans-serif;">SAM.gov</div>
<div class="t " style="left:480.0px;top:1781.00px;font-size:20.68px;font-weight:bold;color:#fff;font-style:normal;font-family:'Liberation Sans', sans-serif;">An official website of the U.S. General Services Administration</div>
</body></html>
